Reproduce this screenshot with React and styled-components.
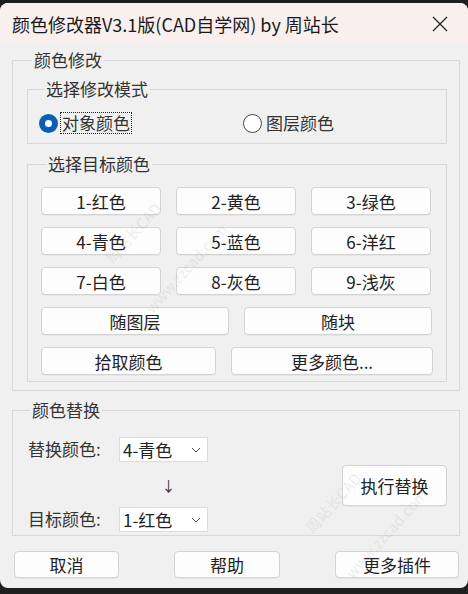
import React, { useState } from "react";
import styled, { createGlobalStyle } from "styled-components";

const GlobalStyle = createGlobalStyle`
  html, body {
    margin: 0;
    padding: 0;
    background: #1e1e1e;
  }
  body {
    font-family: "Noto Sans CJK SC", "Noto Sans", sans-serif;
  }
`;

const Window = styled.div`
  position: relative;
  margin-top: 3px;
  width: 468px;
  height: 585px;
  background: #f0f0f0;
  border-radius: 8px;
  overflow: hidden;
  display: flex;
  flex-direction: column;
`;

const TitleBar = styled.div`
  height: 41px;
  background: #f9efee;
  display: flex;
  align-items: center;
  justify-content: space-between;
  padding: 0 20px 0 12px;
  font-size: 18px;
  color: #1a1a1a;
  flex-shrink: 0;
`;

const Body = styled.div`
  padding: 6px 8px 0 12px;
  font-size: 17px;
  color: #222;
  display: flex;
  flex-direction: column;
`;

const Group = styled.fieldset`
  margin: ${(p) => p.$mt || 0}px 0 0 0;
  padding: ${(p) => p.$pad};
  border: 1px solid #d8d8d8;
  border-radius: 0;
  min-width: 0;
`;

const Legend = styled.legend`
  padding: 0 2px;
  margin-left: 5px;
  font-size: 17px;
  line-height: 20px;
  color: #333;
`;

const RadioRow = styled.div`
  display: flex;
  align-items: center;
  height: 20px;
  margin-top: 14px;
`;

const RadioItem = styled.label`
  display: flex;
  align-items: center;
  gap: 3px;
  width: ${(p) => p.$w}px;
  cursor: default;
`;

const RadioDot = styled.span`
  width: 19px;
  height: 19px;
  border-radius: 50%;
  box-sizing: border-box;
  border: ${(p) => (p.$on ? "6px solid #0a5fb4" : "1px solid #444")};
  background: #fff;
  flex-shrink: 0;
`;

const RadioText = styled.span`
  line-height: 20px;
  padding: 0 1px;
  color: #333;
  outline: ${(p) => (p.$focus ? "1px dotted #222" : "none")};
`;

const ButtonGrid = styled.div`
  display: flex;
  flex-direction: column;
  gap: 12px;
`;

const ButtonRow = styled.div`
  display: grid;
  grid-template-columns: ${(p) => p.$cols};
  column-gap: 15px;
`;

const Btn = styled.button`
  height: ${(p) => p.$h || 28}px;
  width: ${(p) => (p.$w ? p.$w + "px" : "auto")};
  background: #fdfdfd;
  border: 1px solid #d3d3d3;
  border-radius: 4px;
  font-family: "Noto Sans CJK SC", sans-serif;
  font-size: 17px;
  line-height: 1;
  color: #222;
  padding: 0;
  box-shadow: 0 1px 0 rgba(0, 0, 0, 0.04);
`;

const ReplaceLayout = styled.div`
  display: grid;
  grid-template-columns: 1fr 105px;
  align-items: center;
  padding-left: 3px;
`;

const ReplaceLeft = styled.div`
  display: flex;
  flex-direction: column;
`;

const FieldRow = styled.div`
  display: flex;
  align-items: center;
`;

const FieldLabel = styled.span`
  width: 91px;
  font-size: 17px;
  color: #333;
  margin-top: -3px;
`;

const Select = styled.div`
  width: 89px;
  height: 25px;
  box-sizing: border-box;
  background: #fff;
  border: 1px solid #dcdcdc;
  display: flex;
  align-items: center;
  justify-content: space-between;
  padding: 0 6px 0 3px;
  font-size: 17px;
  color: #222;
`;

const Arrow = styled.div`
  height: 45px;
  width: 89px;
  margin-left: 96px;
  display: flex;
  align-items: center;
  justify-content: center;
  font-size: 14px;
  color: #333;
`;

const Footer = styled.div`
  display: flex;
  justify-content: space-between;
  margin-top: 15px;
  padding-right: 1px;
  padding-left: 2px;
`;

const Watermark = styled.div`
  position: absolute;
  left: ${(p) => p.$x}px;
  top: ${(p) => p.$y}px;
  transform: rotate(-48deg);
  transform-origin: left top;
  font-size: 15px;
  color: rgba(120, 120, 120, 0.13);
  white-space: nowrap;
  pointer-events: none;
  font-family: "Noto Sans CJK SC", sans-serif;
`;

const Chevron = () => (
  <svg width="10" height="6" viewBox="0 0 10 6">
    <path d="M1 1l4 4 4-4" fill="none" stroke="#444" strokeWidth="1" />
  </svg>
);

const CloseIcon = () => (
  <svg width="16" height="16" viewBox="0 0 16 16">
    <path d="M1 1l14 14M15 1L1 15" stroke="#222" strokeWidth="1.3" />
  </svg>
);

const colorRows = [
  { cols: "120px 120px 120px", items: ["1-红色", "2-黄色", "3-绿色"] },
  { cols: "120px 120px 120px", items: ["4-青色", "5-蓝色", "6-洋红"] },
  { cols: "120px 120px 120px", items: ["7-白色", "8-灰色", "9-浅灰"] },
  { cols: "188px 188px", items: ["随图层", "随块"] },
  { cols: "175px 202px", items: ["拾取颜色", "更多颜色..."] },
];

export default function App() {
  const [mode, setMode] = useState("object");

  return (
    <>
      <GlobalStyle />
      <Window>
        <TitleBar>
          <span>颜色修改器V3.1版(CAD自学网) by 周站长</span>
          <CloseIcon />
        </TitleBar>
        <Body>
          <Group $pad="0 12px 8px 14px">
            <Legend>颜色修改</Legend>
            <Group $mt={9} $pad="0 10px 10px 11px">
              <Legend>选择修改模式</Legend>
              <RadioRow>
                <RadioItem $w={204} onClick={() => setMode("object")}>
                  <RadioDot $on={mode === "object"} />
                  <RadioText $focus>对象颜色</RadioText>
                </RadioItem>
                <RadioItem $w={120} onClick={() => setMode("layer")}>
                  <RadioDot $on={mode === "layer"} />
                  <RadioText>图层颜色</RadioText>
                </RadioItem>
              </RadioRow>
            </Group>
            <Group $mt={10} $pad="13px 10px 6px 13px">
              <Legend>选择目标颜色</Legend>
              <ButtonGrid>
                {colorRows.map((row, i) => (
                  <ButtonRow key={i} $cols={row.cols}>
                    {row.items.map((t) => (
                      <Btn key={t}>{t}</Btn>
                    ))}
                  </ButtonRow>
                ))}
              </ButtonGrid>
            </Group>
          </Group>

          <Group $mt={9} $pad="17px 12px 3px 12px">
            <Legend>颜色替换</Legend>
            <ReplaceLayout>
              <ReplaceLeft>
                <FieldRow>
                  <FieldLabel>替换颜色:</FieldLabel>
                  <Select>
                    <span>4-青色</span>
                    <Chevron />
                  </Select>
                </FieldRow>
                <Arrow>↓</Arrow>
                <FieldRow>
                  <FieldLabel>目标颜色:</FieldLabel>
                  <Select>
                    <span>1-红色</span>
                    <Chevron />
                  </Select>
                </FieldRow>
              </ReplaceLeft>
              <Btn $h={41} $w={105} style={{ marginTop: 2 }}>执行替换</Btn>
            </ReplaceLayout>
          </Group>

          <Footer>
            <Btn $h={27} $w={105}>取消</Btn>
            <Btn $h={27} $w={106}>帮助</Btn>
            <Btn $h={27} $w={124}>更多插件</Btn>
          </Footer>
        </Body>

        <Watermark $x={100} $y={250}>周站长CAD</Watermark>
        <Watermark $x={140} $y={300}>www.zzcad.com</Watermark>
        <Watermark $x={300} $y={520}>周站长CAD</Watermark>
        <Watermark $x={340} $y={565}>www.zzcad.com</Watermark>
      </Window>
    </>
  );
}
